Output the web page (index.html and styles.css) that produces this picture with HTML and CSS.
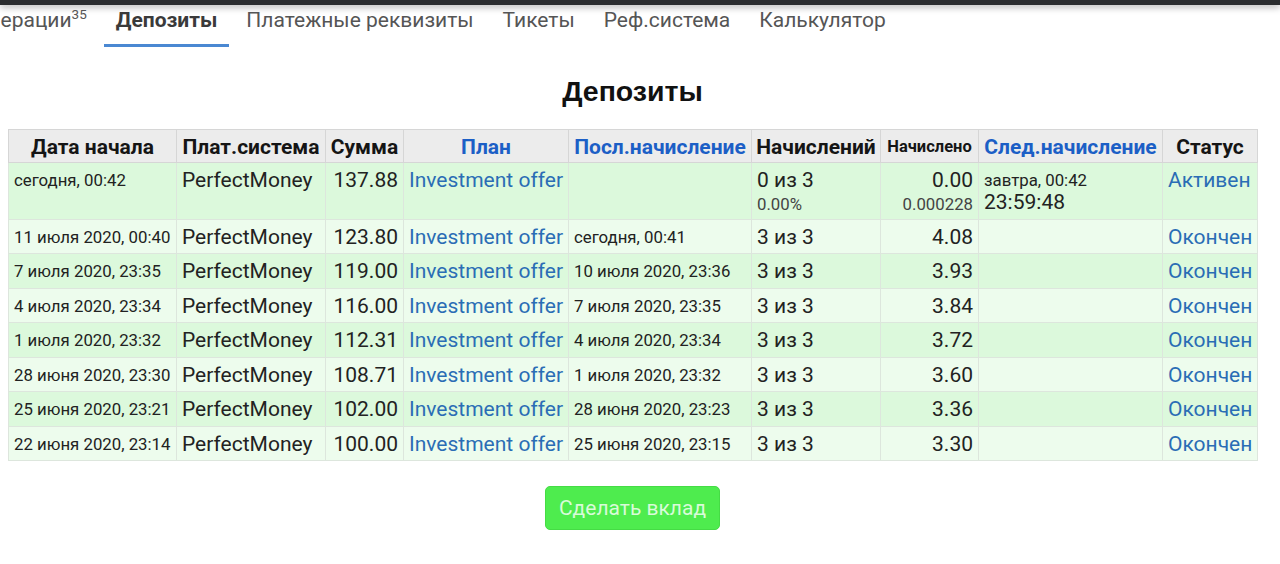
FILE: index.html
```html
<!DOCTYPE html>
<html lang="ru">
<head>
<meta charset="utf-8">
<title>Депозиты</title>
<link rel="stylesheet" href="styles.css">
</head>
<body>
<div class="topbar"></div>
<nav class="tabs">
  <a class="tab">Операции<sup>35</sup></a>
  <a class="tab active">Депозиты</a>
  <a class="tab">Платежные реквизиты</a>
  <a class="tab">Тикеты</a>
  <a class="tab">Реф.система</a>
  <a class="tab">Калькулятор</a>
</nav>
<main class="content">
  <h1 class="title">Депозиты</h1>
  <table class="deps">
    <colgroup>
      <col class="c-date"><col class="c-sys"><col class="c-sum"><col class="c-plan"><col class="c-last">
      <col class="c-cnt"><col class="c-acc"><col class="c-next"><col class="c-st">
    </colgroup>
    <thead>
      <tr>
        <th>Дата начала</th>
        <th>Плат.система</th>
        <th>Сумма</th>
        <th><a class="hlink">План</a></th>
        <th><a class="hlink">Посл.начисление</a></th>
        <th>Начислений</th>
        <th class="small">Начислено</th>
        <th><a class="hlink">След.начисление</a></th>
        <th>Статус</th>
      </tr>
    </thead>
    <tbody>
      <tr class="odd">
        <td class="date">сегодня, 00:42</td>
        <td>PerfectMoney</td>
        <td class="num">137.88</td>
        <td><a class="link">Investment offer</a></td>
        <td class="date"></td>
        <td>0 из 3<div class="sub">0.00%</div></td>
        <td class="num">0.00<div class="sub">0.000228</div></td>
        <td><div class="next-date">завтра, 00:42</div><div class="timer">23:59:48</div></td>
        <td><a class="link">Активен</a></td>
      </tr>
      <tr class="even">
        <td class="date">11 июля 2020, 00:40</td><td>PerfectMoney</td><td class="num">123.80</td>
        <td><a class="link">Investment offer</a></td><td class="date">сегодня, 00:41</td>
        <td>3 из 3</td><td class="num">4.08</td><td></td><td><a class="link">Окончен</a></td>
      </tr>
      <tr class="odd">
        <td class="date">7 июля 2020, 23:35</td><td>PerfectMoney</td><td class="num">119.00</td>
        <td><a class="link">Investment offer</a></td><td class="date">10 июля 2020, 23:36</td>
        <td>3 из 3</td><td class="num">3.93</td><td></td><td><a class="link">Окончен</a></td>
      </tr>
      <tr class="even">
        <td class="date">4 июля 2020, 23:34</td><td>PerfectMoney</td><td class="num">116.00</td>
        <td><a class="link">Investment offer</a></td><td class="date">7 июля 2020, 23:35</td>
        <td>3 из 3</td><td class="num">3.84</td><td></td><td><a class="link">Окончен</a></td>
      </tr>
      <tr class="odd">
        <td class="date">1 июля 2020, 23:32</td><td>PerfectMoney</td><td class="num">112.31</td>
        <td><a class="link">Investment offer</a></td><td class="date">4 июля 2020, 23:34</td>
        <td>3 из 3</td><td class="num">3.72</td><td></td><td><a class="link">Окончен</a></td>
      </tr>
      <tr class="even">
        <td class="date">28 июня 2020, 23:30</td><td>PerfectMoney</td><td class="num">108.71</td>
        <td><a class="link">Investment offer</a></td><td class="date">1 июля 2020, 23:32</td>
        <td>3 из 3</td><td class="num">3.60</td><td></td><td><a class="link">Окончен</a></td>
      </tr>
      <tr class="odd">
        <td class="date">25 июня 2020, 23:21</td><td>PerfectMoney</td><td class="num">102.00</td>
        <td><a class="link">Investment offer</a></td><td class="date">28 июня 2020, 23:23</td>
        <td>3 из 3</td><td class="num">3.36</td><td></td><td><a class="link">Окончен</a></td>
      </tr>
      <tr class="even">
        <td class="date">22 июня 2020, 23:14</td><td>PerfectMoney</td><td class="num">100.00</td>
        <td><a class="link">Investment offer</a></td><td class="date">25 июня 2020, 23:15</td>
        <td>3 из 3</td><td class="num">3.30</td><td></td><td><a class="link">Окончен</a></td>
      </tr>
    </tbody>
  </table>
  <div class="actions">
    <button class="btn">Сделать вклад</button>
  </div>
</main>
</body>
</html>
```

FILE: styles.css
```css
html, body {
  margin: 0;
  padding: 0;
  background: #ffffff;
  font-family: Roboto, "Noto Sans", sans-serif;
  color: #222;
  overflow: hidden;
}

.topbar {
  height: 5px;
  background: #2b2d2f;
  box-shadow: 0 2px 7px rgba(0, 0, 0, 0.35);
}

.tabs {
  display: flex;
  gap: 5px;
  margin-left: -38px;
  white-space: nowrap;
}

.tab {
  display: block;
  padding: 3px 12px 12px;
  font-size: 21px;
  line-height: 24px;
  color: #555;
  border-bottom: 3px solid transparent;
}

.tab sup {
  font-size: 13.5px;
  line-height: 0;
  vertical-align: 8px;
  color: #555;
}

.tab.active {
  font-weight: bold;
  color: #3a3a3a;
  border-bottom-color: #4a88d2;
}

.content {
  padding: 0 0 0 8px;
}

.title {
  margin: 28px 0 0;
  width: 1249px;
  text-align: center;
  font-family: "Liberation Sans", Arial, sans-serif;
  font-weight: bold;
  font-size: 28.5px;
  line-height: 32px;
  color: #111;
}

.deps {
  margin-top: 22px;
  width: 1249px;
  table-layout: fixed;
  border-collapse: collapse;
  font-size: 21px;
}

.c-date { width: 168px; }
.c-sys { width: 149px; }
.c-sum { width: 78px; }
.c-plan { width: 165px; }
.c-last { width: 183px; }
.c-cnt { width: 129px; }
.c-acc { width: 98px; }
.c-next { width: 184px; }
.c-st { width: 95px; }

.deps th,
.deps td {
  border: 1px solid #dde6dd;
  padding: 6px 5px 4px 5px;
  line-height: 23.5px;
  vertical-align: top;
  text-align: left;
  white-space: nowrap;
  overflow: hidden;
}

.deps th {
  background: #ececec;
  border-color: #d6d6d6;
  font-weight: bold;
  font-size: 21px;
  line-height: 22px;
  color: #151515;
  text-align: center;
  padding-left: 1px;
  padding-right: 1px;
}

.deps th.small {
  font-size: 16.5px;
}

.hlink {
  color: #1c5fc6;
}

.deps tr.odd td { background: #dcf9dc; }
.deps tr.even td { background: #edfced; }

.deps td.num { text-align: right; }

.deps .date {
  font-size: 16.8px;
}

.sub {
  font-size: 16.8px;
  line-height: 22px;
  color: #444;
}

.next-date {
  font-size: 16.8px;
  line-height: 22px;
}

.timer {
  line-height: 23px;
}

.link {
  color: #2a6db5;
}

.actions {
  width: 1249px;
  display: flex;
  justify-content: center;
  padding-top: 25px;
}

.btn {
  width: 175px;
  height: 44px;
  background: #4eec4e;
  border: 1px solid #45dc45;
  border-radius: 5px;
  color: #d9fbd9;
  font-family: Roboto, sans-serif;
  font-size: 21px;
}
```
